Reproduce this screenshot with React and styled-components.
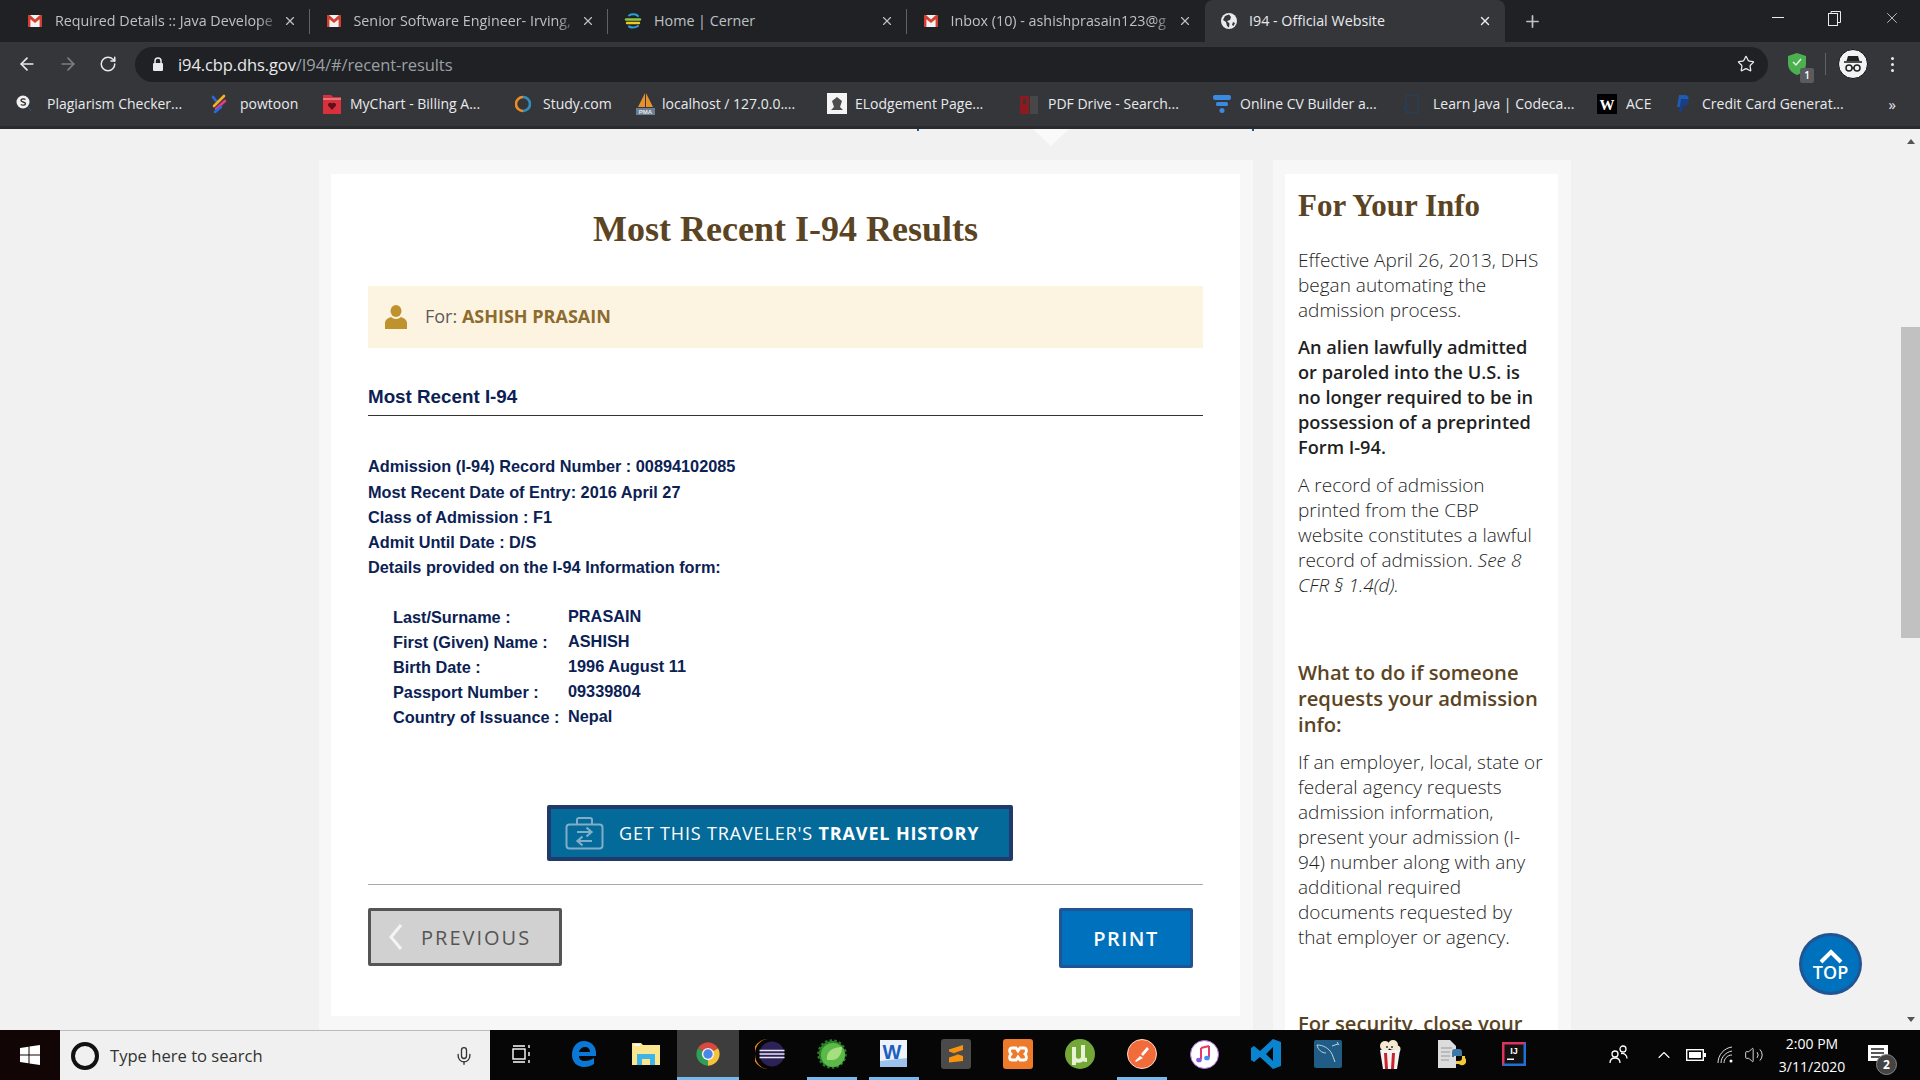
import React from "react";
import styled, { createGlobalStyle } from "styled-components";
import { ArrowLeft, ArrowRight, RotateCw, Star, X, Plus, Mic, ChevronUp, Volume2 } from "lucide-react";

const Global = createGlobalStyle`
    html, body { margin: 0; padding: 0; width: 1920px; height: 1080px; overflow: hidden; background: #f1f1f1; }
    * { box-sizing: border-box; }
`;

const Page = styled.div`
    width: 1920px;
    height: 1080px;
    display: flex;
    flex-direction: column;
    overflow: hidden;
    font-family: "Open Sans", "Liberation Sans", sans-serif;
`;

/* browser chrome */
const TabStrip = styled.div`
    height: 42px;
    flex: none;
    display: flex;
    padding-left: 11px;
    background: #202124;
`;

const Tab = styled.div`
    position: relative;
    width: ${p => (p.$active ? "300px" : "298.5px")};
    height: 42px;
    display: flex;
    align-items: center;
    padding: 0 13px 0 16px;
    border-radius: 8px 8px 0 0;
    background: ${p => (p.$active ? "#35363a" : "transparent")};
    color: ${p => (p.$active ? "#e8eaed" : "#bdc1c6")};
    font-size: 14.3px;
    ${p => p.$sep && `
      &::after {
        content: "";
        position: absolute;
        right: 0;
        top: 9px;
        height: 25px;
        width: 1px;
        background: #5f6368;
      }
    `}
`;

const TabTitle = styled.span`
    flex: 1;
    margin: 0 2px 2px 12px;
    white-space: nowrap;
    overflow: hidden;
    -webkit-mask-image: ${p => (p.$fade ? "linear-gradient(to right, #000 90%, transparent 100%)" : "none")};
    mask-image: ${p => (p.$fade ? "linear-gradient(to right, #000 90%, transparent 100%)" : "none")};
`;

const NewTab = styled.div`
    width: 44px;
    height: 42px;
    display: flex;
    align-items: center;
    justify-content: center;
    margin-left: 5px;
    color: #bdc1c6;
`;

const WindowControls = styled.div`
    margin-left: auto;
    display: flex;
    height: 36px;
    align-items: center;
    color: #e8eaed;
`;

const WindowButton = styled.div`
    width: 57px;
    display: flex;
    justify-content: center;
    align-items: center;
`;

const Toolbar = styled.div`
    height: 42px;
    flex: none;
    display: flex;
    align-items: center;
    background: #35363a;
    padding: 2px 0 0 17px;
`;

const NavButton = styled.div`
    width: 41px;
    flex: none;
    display: flex;
    color: ${p => (p.$dim ? "#7c7e82" : "#e8eaed")};
`;

const Omnibox = styled.div`
    width: 1633px;
    margin-left: -5px;
    height: 35px;
    flex: none;
    display: flex;
    align-items: center;
    padding: 0 13px 0 17px;
    border-radius: 18px;
    background: #202124;
    color: #9aa0a6;
    font-size: 16.5px;
`;

const Url = styled.div`
    margin-left: 14px;
    letter-spacing: -0.1px;
    span { color: #e8eaed; }
`;

const StarBox = styled.div`
    margin-left: auto;
    display: flex;
    color: #e8eaed;
`;

const ExtensionArea = styled.div`
    display: flex;
    align-items: center;
    padding-left: 19px;
`;

const Divider = styled.div`
    width: 1px;
    height: 22px;
    margin: 0 12px 0 18px;
    background: #5f6368;
`;

const Avatar = styled.div`
    width: 30px;
    height: 30px;
    border-radius: 50%;
    background: #f1f3f4;
    display: flex;
    align-items: center;
    justify-content: center;
    border: 1px solid #111;
`;

const MenuDots = styled.div`
    margin-left: 23px;
    display: flex;
    flex-direction: column;
    gap: 3px;
    i { width: 3px; height: 3px; border-radius: 50%; background: #e8eaed; display: block; }
`;

const ShieldWrap = styled.div`
    position: relative;
    display: flex;
`;

const ShieldBadge = styled.div`
    position: absolute;
    right: -7px;
    bottom: -7px;
    width: 14px;
    height: 15px;
    border-radius: 2px;
    background: #5a5b5e;
    color: #fff;
    font-size: 10px;
    font-weight: 600;
    text-align: center;
    line-height: 15px;
`;

const BookmarkBar = styled.div`
    height: 45px;
    flex: none;
    display: flex;
    align-items: center;
    padding: 0 0 3px 16px;
    background: #35363a;
    border-bottom: 3px solid #2a2b2e;
    color: #e8eaed;
    font-size: 14px;
`;

const Bookmark = styled.div`
    width: ${p => p.$w}px;
    flex: none;
    display: flex;
    align-items: center;
    gap: ${p => p.$gap || 12}px;
    white-space: nowrap;
`;

const MoreBookmarks = styled.div`
    margin-left: auto;
    margin-right: 24px;
    font-size: 15px;
`;

/* page */
const Viewport = styled.div`
    position: relative;
    flex: 1;
    min-height: 0;
    display: flex;
    background: #f1f1f1;
    overflow: hidden;
`;

const Content = styled.div`
    flex: 1;
    display: flex;
    align-items: flex-start;
    gap: 20px;
    padding: 31px 0 0 319px;
`;

const NavNotch = styled.div`
    position: absolute;
    left: 1033px;
    top: 0;
    border-left: 18px solid transparent;
    border-right: 18px solid transparent;
    border-top: 17px solid #fafafa;
`;

const NavTick = styled.div`
    position: absolute;
    left: ${p => p.$x}px;
    top: 0;
    width: 2px;
    height: 2px;
    background: #1a5a96;
`;

const Frame = styled.div`
    width: ${p => p.$w}px;
    flex: none;
    padding: 14px 13px 14px 12px;
    background: #f7f7f7;
`;

const MainCard = styled.main`
    height: 842px;
    padding: 25px 37px 0;
    background: #fff;
`;

const Title = styled.h1`
    margin: 0;
    text-align: center;
    font: 700 36px/60px "Liberation Serif", serif;
    color: #5b4423;
`;

const ForBanner = styled.div`
    height: 62px;
    margin-top: 27px;
    display: flex;
    align-items: center;
    gap: 18px;
    padding: 0 17px;
    background: #fdf3e1;
    color: #5b5b5b;
    font-size: 18px;
    b { color: #8c6c2e; font-weight: 700; }
    span { padding-bottom: 2px; }
`;

const SectionHead = styled.h2`
    margin: 37px 0 0;
    padding-bottom: 6px;
    border-bottom: 1px solid #333;
    font: 700 18.8px/24px "Liberation Sans", sans-serif;
    color: #0b2154;
`;

const Details = styled.div`
    margin-top: 38px;
    font: 700 16.3px/25px "Liberation Sans", sans-serif;
    color: #0b2154;
    div:first-child { margin-bottom: 1px; }
`;

const Traveler = styled.div`
    margin: 25px 0 0 25px;
    font: 700 16.3px/25px "Liberation Sans", sans-serif;
    color: #0b2154;
`;

const TravelerRow = styled.div`
    display: flex;
`;

const Label = styled.div`
    width: 175px;
`;

const Value = styled.div`
    transform: translateY(-1px);
`;

const TravelButton = styled.div`
    width: 466px;
    height: 56px;
    margin: 75px 0 0 179px;
    display: flex;
    align-items: center;
    padding-left: 14px;
    gap: 15px;
    border: 4px solid #1f3a6b;
    border-radius: 2px;
    background: #046a99;
    color: #fff;
    font-size: 18px;
    letter-spacing: 0.85px;
    white-space: nowrap;
    b { font-weight: 700; }
`;

const Rule = styled.div`
    height: 1px;
    margin-top: 23px;
    background: #aaa;
`;

const ButtonRow = styled.div`
    display: flex;
    align-items: flex-start;
    justify-content: space-between;
    margin-top: 23px;
    padding-right: 10px;
`;

const PrevButton = styled.div`
    width: 194px;
    height: 58px;
    display: flex;
    align-items: center;
    gap: 17px;
    padding-left: 17px;
    border: 3px solid #555;
    border-radius: 2px;
    background: #d1d1d1;
    color: #555;
    font-size: 20px;
    letter-spacing: 2px;
`;

const PrintButton = styled.div`
    width: 134px;
    height: 60px;
    display: flex;
    align-items: center;
    justify-content: center;
    border: 3px solid #205493;
    border-radius: 2px;
    background: #0071bc;
    color: #fff;
    font-size: 20px;
    font-weight: 600;
    letter-spacing: 1.5px;
`;

const SideCard = styled.aside`
    height: 860px;
    padding: 12px 13px 0;
    background: #fff;
    color: #1f1f1f;
    font-size: 19px;
    line-height: 25px;
    font-weight: 300;
`;

const SideTitle = styled.h2`
    margin: 0;
    font: 700 31px/40px "Liberation Serif", serif;
    color: #5b4423;
`;

const SideText = styled.p`
    margin: ${p => p.$top}px 0 0;
    font-weight: ${p => (p.$strong ? 600 : 300)};
    font-size: ${p => (p.$strong ? "18.2px" : "19px")};
`;

const SideHead = styled.h3`
    margin: ${p => p.$top}px 0 0;
    font-size: 20.2px;
    line-height: 26px;
    font-weight: 600;
    color: #5b4423;
`;

const Scrollbar = styled.div`
    width: 19px;
    flex: none;
    display: flex;
    flex-direction: column;
    align-items: center;
`;

const ScrollArrow = styled.div`
    margin-top: ${p => p.$top}px;
    border-left: 4px solid transparent;
    border-right: 4px solid transparent;
    ${p => (p.$up ? "border-bottom: 5px solid #555;" : "border-top: 5px solid #555;")}
`;

const ScrollThumb = styled.div`
    width: 19px;
    height: 311px;
    margin-top: 183px;
    background: #c1c1c1;
`;

const TopButton = styled.div`
    position: absolute;
    left: 1799px;
    top: 804px;
    width: 63px;
    height: 62px;
    display: flex;
    flex-direction: column;
    align-items: center;
    justify-content: center;
    border: 3px solid #205493;
    border-radius: 50%;
    background: #0071bc;
    color: #fff;
    font-size: 18px;
    line-height: 16px;
    font-weight: 600;
`;

/* taskbar */
const Taskbar = styled.div`
    height: 50px;
    flex: none;
    display: flex;
    align-items: center;
    background: #060606;
    color: #fff;
`;

const StartButton = styled.div`
    width: 60px;
    height: 50px;
    display: flex;
    align-items: center;
    justify-content: center;
    background: #120505;
`;

const SearchBox = styled.div`
    width: 430px;
    height: 50px;
    display: flex;
    align-items: center;
    padding: 0 16px 0 11px;
    background: #f0f0f0;
    border-top: 1px solid #bbb;
    color: #333;
    font-size: 16.6px;
`;

const Cortana = styled.div`
    width: 28px;
    height: 28px;
    margin-right: 11px;
    border-radius: 50%;
    border: 4px solid #111;
`;

const MicBox = styled.div`
    margin-left: auto;
    display: flex;
    color: #333;
`;

const TaskSlot = styled.div`
    position: relative;
    width: ${p => p.$w || 62}px;
    height: 50px;
    flex: none;
    display: flex;
    align-items: center;
    justify-content: center;
    padding-bottom: 2px;
    background: ${p => (p.$open ? "#3d3d3d" : "transparent")};
    ${p => p.$bar && `
      &::after {
        content: "";
        position: absolute;
        left: ${p.$open ? 0 : 6}px;
        right: ${p.$open ? 0 : 6}px;
        bottom: 0;
        height: 3px;
        background: #76b9ed;
      }
    `}
`;

const Tray = styled.div`
    margin-left: auto;
    padding-right: 32px;
    display: flex;
    align-items: center;
    height: 50px;
`;

const TrayIcon = styled.div`
    width: ${p => p.$w}px;
    margin-left: ${p => p.$ml || 0}px;
    display: flex;
    justify-content: center;
    color: #fff;
`;

const Clock = styled.div`
    width: 90px;
    text-align: center;
    font-size: 14px;
    line-height: 23px;
`;

const NoticeWrap = styled.div`
    position: relative;
    margin-left: 11px;
    width: 20px;
    display: flex;
    padding: 3px 0 5px;
`;

const NoticeBadge = styled.div`
    position: absolute;
    left: 8px;
    top: 12px;
    width: 21px;
    height: 21px;
    border-radius: 50%;
    background: #444;
    border: 1px solid #888;
    color: #fff;
    font-size: 12px;
    font-weight: 700;
    line-height: 19px;
    text-align: center;
`;

/* drawings */
const Gmail = () => (
    <svg width="16" height="16" viewBox="0 0 16 16">
        <rect x="1" y="2" width="14" height="12" fill="#f1f1f1" />
        <path d="M1 2h2l5 4.5L13 2h2v12h-2.4V6.2L8 10 3.4 6.2V14H1z" fill="#d23f31" />
    </svg>
);

const Cerner = () => (
    <svg width="18" height="18" viewBox="0 0 18 18" fill="none" strokeLinecap="round">
        <path d="M5 3.5C8 1.5 12 2 14 4" stroke="#2d9fd8" strokeWidth="2" />
        <path d="M2 7.5h14" stroke="#8cc63f" strokeWidth="2.4" />
        <path d="M3 11h12" stroke="#f2c81e" strokeWidth="2.4" />
        <path d="M5 14.5c3 1.5 6 1.5 9-.5" stroke="#2d9fd8" strokeWidth="2" />
    </svg>
);

const GlobeFav = () => (
    <svg width="16" height="16" viewBox="0 0 16 16">
        <circle cx="8" cy="8" r="8" fill="#e8eaed" />
        <path d="M8 1.5 4 3 2 7l3 2 1 4 2 1.5.5-4L6 8l3-1 1-3zM12 9l-1 3 1.5 1 1.5-3z" fill="#35363a" />
    </svg>
);

const LockIcon = () => (
    <svg width="12" height="15" viewBox="0 0 12 15">
        <path d="M3 6V4a3 3 0 0 1 6 0v2" fill="none" stroke="#e8eaed" strokeWidth="1.5" />
        <rect x="1" y="6" width="10" height="8" rx="1" fill="#e8eaed" />
    </svg>
);

const Shield = () => (
    <svg width="20" height="24" viewBox="0 0 20 24">
        <path d="M10 1 19 4v8c0 5-4 9-9 11-5-2-9-6-9-11V4z" fill="#4caf50" />
        <path d="m6 10 3 3 5-6" fill="none" stroke="#e8f5e9" strokeWidth="1.5" />
    </svg>
);

const Incognito = () => (
    <svg width="22" height="22" viewBox="0 0 22 22" fill="none">
        <path d="M6 3h10l1.500 5h-13z" fill="#222" />
        <path d="M2 9h18" stroke="#222" strokeWidth="1.6" />
        <circle cx="7" cy="15" r="3" stroke="#222" strokeWidth="1.5" />
        <circle cx="15" cy="15" r="3" stroke="#222" strokeWidth="1.5" />
        <path d="M10 15h2" stroke="#222" strokeWidth="1.5" />
    </svg>
);

const Plagiarism = () => (
    <svg width="16" height="18" viewBox="0 0 16 18">
        <circle cx="7" cy="7" r="6.5" fill="#f1f1f1" />
        <path d="M9.5 4.500C8 3.500 5 3.800 5 5.500 5 7.500 9.500 6.500 9.500 8.700 9.500 10.300 6.500 10.500 4.800 9.500" fill="none" stroke="#333" strokeWidth="1.4" />
        <path d="m12 12 3 4" stroke="#3a5068" strokeWidth="1.2" />
    </svg>
);

const Powtoon = () => (
    <svg width="16" height="20" viewBox="0 0 16 20" fill="none" strokeWidth="2.6" strokeLinecap="round">
        <path d="M2 3 6 8" stroke="#2a6ae0" />
        <path d="M13 2 3 12" stroke="#f5b21b" />
        <path d="M14 7 5 15" stroke="#e23c8a" />
        <path d="M10 13 4 18" stroke="#2a6ae0" />
    </svg>
);

const MyChart = () => (
    <svg width="20" height="22" viewBox="0 0 20 22">
        <path d="M1 2h8l2 2h8v17H1z" fill="#d8303c" />
        <path d="M1 6h18" stroke="#f3b6ba" strokeWidth="1" />
        <path d="M10 17 6 12.500a2.300 2.300 0 0 1 4-2 2.300 2.300 0 0 1 4 2z" fill="#5a1218" />
    </svg>
);

const Study = () => (
    <svg width="16" height="18" viewBox="0 0 16 18" fill="none" strokeWidth="2.6">
        <path d="M8 2a7 7 0 0 0 0 14" stroke="#f08a24" />
        <path d="M8 2a7 7 0 0 1 0 14" stroke="#2f8fc0" />
    </svg>
);

const Pma = () => (
    <svg width="21" height="24" viewBox="0 0 21 24">
        <path d="M10 1 3 15h7zM11 1l7 14h-7z" fill="#e8912b" />
        <path d="M1 16h19v7H1z" fill="#6e7d96" />
        <text x="10.5" y="22" fontSize="6" fontWeight="700" fill="#e6e6e6" textAnchor="middle" fontFamily="Liberation Sans">PMA</text>
    </svg>
);

const Elodge = () => (
    <svg width="20" height="21" viewBox="0 0 20 21">
        <rect width="20" height="21" fill="#f4f4f4" />
        <path d="M10 4 15 8 13 14 16 17H4l3-3-2-6z" fill="#4e4e4e" />
    </svg>
);

const PdfDrive = () => (
    <svg width="20" height="21" viewBox="0 0 20 21">
        <path d="M1 3h9v18H1z" fill="#8d1a1e" />
        <path d="M11 3h8v18h-8z" fill="#47474a" />
        <path d="M4 6h3v5H4z" fill="#35363a" />
    </svg>
);

const CvBuilder = () => (
    <svg width="20" height="22" viewBox="0 0 20 22">
        <rect x="1" y="2" width="18" height="5" rx="2" fill="#3a8be0" />
        <rect x="4" y="9" width="12" height="4" rx="1.5" fill="#3a8be0" />
        <rect x="7.5" y="15" width="5" height="5" rx="2.5" fill="#3a8be0" />
    </svg>
);

const Codecademy = () => (
    <svg width="18" height="22" viewBox="0 0 18 22" fill="none" stroke="#26405c" strokeWidth="1.2">
        <path d="M3 2h12v18H3z" />
        <path d="M7 13a3 3 0 1 0 0 3" />
    </svg>
);

const AceTile = () => (
    <svg width="20" height="20" viewBox="0 0 20 20">
        <rect width="20" height="20" fill="#000" />
        <text x="10" y="16" textAnchor="middle" fontSize="15" fontWeight="700" fill="#fff" fontFamily="Liberation Serif">W</text>
    </svg>
);

const Paypal = () => (
    <svg width="14" height="20" viewBox="0 0 14 20">
        <path d="M3 1h6c4 0 5 5 1 7H6l-1 5H1z" fill="#1f5bb0" />
        <path d="M5 5h6c3 1 2 7-2 7H7l-1 6H3z" fill="#1a3e86" />
    </svg>
);

const TravelIcon = () => (
    <svg width="39" height="33" viewBox="0 0 39 33" fill="none" stroke="#80aec8" strokeWidth="2">
        <rect x="1.5" y="7.5" width="36" height="24" rx="3" />
        <path d="M12 7.5V3a2 2 0 0 1 2-2h11a2 2 0 0 1 2 2v4.500" />
        <path d="M12 15h14M21.500 10.500l5 4.500-5 4.500M27 24H13M17.500 19.500l-5 4.500 5 4.500" strokeWidth="2.2" />
    </svg>
);

const PersonIcon = () => (
    <svg width="22" height="24" viewBox="0 0 22 24" fill="#c0922d">
        <ellipse cx="11" cy="6" rx="5.5" ry="6" />
        <path d="M0 24v-6c0-3 3-5 6-6 3 2.500 7 2.500 10 0 3 1 6 3 6 6v6z" />
    </svg>
);

const PrevChevron = () => (
    <svg width="16" height="28" viewBox="0 0 16 28" fill="none" stroke="#f4f4f4" strokeWidth="3">
        <path d="M13 2 3 14l10 12" />
    </svg>
);

const WindowsLogo = () => (
    <svg width="20" height="20" viewBox="0 0 20 20" fill="#fff">
        <path d="M0 3l8.500-1.300v7.800H0zM9.500 1.500 20 0v9.500H9.500zM0 10.500h8.500v7.800L0 17zM9.500 10.500H20V20L9.500 18.500z" />
    </svg>
);

const TaskView = () => (
    <svg width="20" height="20" viewBox="0 0 20 20" fill="none" stroke="#fff" strokeWidth="1.4">
        <rect x="1" y="5" width="12" height="10" />
        <path d="M1 2h12M1 18h12M17 1v3M17 8v4M17 16v3" />
    </svg>
);

const Edge = () => (
    <svg width="26" height="28" viewBox="0 0 26 28">
        <path d="M13 1C6 1 1 7 1 15c0 7 5 12 12 12 4 0 7-1 10-3v-6c-3 2-6 3-9 3-4 0-6-2-6-5h17v-3C25 6 20 1 13 1zm-5 11c.5-3 3-5 6-5s5 2 5 5z" fill="#0a78d7" />
    </svg>
);

const Explorer = () => (
    <svg width="28" height="24" viewBox="0 0 28 24">
        <path d="M0 1h9l2 2h17v20H0z" fill="#fbe58d" />
        <rect x="2" y="2" width="6" height="2" fill="#f5f5f5" />
        <path d="M5 12h18v11h-5v-6h-8v6H5z" fill="#3fb4e8" />
    </svg>
);

const Chrome = () => (
    <svg width="28" height="28" viewBox="0 0 48 48">
        <path d="M24 24 6.700 14A20 20 0 0 1 41.300 14z" fill="#d8483c" />
        <path d="M24 24 41.300 14A20 20 0 0 1 24 44z" fill="#f5c33b" />
        <path d="M24 24 24 44A20 20 0 0 1 6.700 14z" fill="#2f9e57" />
        <circle cx="24" cy="24" r="10.5" fill="#f1f1f1" />
        <circle cx="24" cy="24" r="8" fill="#4a87e8" />
    </svg>
);

const Eclipse = () => (
    <svg width="30" height="30" viewBox="0 0 30 30">
        <path d="M13 0A15 15 0 0 0 13 30 13 15 0 0 1 13 0z" fill="#f08a1d" />
        <circle cx="17" cy="15" r="12.500" fill="#2c2255" />
        <path d="M4.500 11.500h25M4.500 15h25M4.500 18.500h25" stroke="#e8e6f4" strokeWidth="1.7" />
    </svg>
);

const Spring = () => (
    <svg width="30" height="30" viewBox="0 0 30 30">
        <circle cx="15" cy="15" r="13" fill="#2f8f2f" strokeDasharray="2.500 2" stroke="#2a7a2a" strokeWidth="3.500" />
        <circle cx="16" cy="16" r="12" fill="#5bb947" />
        <path d="M10 21C9 13 15 8 25 8c0 8-5 14-11 13z" fill="#a6df80" />
    </svg>
);

const Word = () => (
    <svg width="28" height="28" viewBox="0 0 28 28">
        <rect width="27" height="27" fill="#eef3fb" />
        <path d="M0 21 27 18v9H0z" fill="#9cc1ec" />
        <text x="12" y="19" textAnchor="middle" fontSize="20" fontWeight="700" fill="#1d5fbf" fontFamily="Liberation Sans">W</text>
    </svg>
);

const Sublime = () => (
    <svg width="30" height="30" viewBox="0 0 30 30">
        <rect width="30" height="30" rx="3" fill="#4a4a4a" />
        <path d="M8 10.500 22 6v5l-9 3 9 3v5L8 23.500v-5l9-3-9-3z" fill="#f7930e" />
    </svg>
);

const Xampp = () => (
    <svg width="30" height="30" viewBox="0 0 30 30">
        <rect width="30" height="30" rx="3" fill="#ee7a2c" />
        <path d="M9 9h4l2 3 2-3h4c3 0 3 4 1 6 2 2 2 6-1 6h-4l-2-3-2 3H9c-3 0-3-4-1-6-2-2-2-6 1-6z" fill="none" stroke="#fff" strokeWidth="2.8" />
    </svg>
);

const Torrent = () => (
    <svg width="30" height="30" viewBox="0 0 30 30">
        <circle cx="15" cy="15" r="15" fill="#73a839" />
        <path d="M9 8v10c0 5 9 5 9 0V6M18 18c0 2 1 3 4 3M9 18v8" fill="none" stroke="#e8f3d6" strokeWidth="4" />
    </svg>
);

const Postman = () => (
    <svg width="30" height="30" viewBox="0 0 30 30">
        <circle cx="15" cy="15" r="14.5" fill="#f26b3a" stroke="#ffd9c8" strokeWidth="1" />
        <path d="m8 22 5-5 3 2-7 4zM14 15l6-7 2 2-6 7z" fill="#fff" />
    </svg>
);

const Itunes = () => (
    <svg width="29" height="29" viewBox="0 0 29 29">
        <circle cx="14.5" cy="14.5" r="14" fill="#fff" stroke="#b06ad8" strokeWidth="1" />
        <path d="M11 8v11M19 6v11M11 8l8-2" stroke="#e8386a" strokeWidth="2" fill="none" />
        <ellipse cx="9" cy="20" rx="2.8" ry="2.3" fill="#8a5be0" />
        <ellipse cx="17" cy="18" rx="2.8" ry="2.3" fill="#3c8ef0" />
    </svg>
);

const VsCode = () => (
    <svg width="30" height="30" viewBox="0 0 30 30">
        <path d="M22 0 30 3v24l-8 3-13-12-6 5-3-2V9l3-2 6 5zM22 8l-7 7 7 7z" fill="#0a84cf" />
    </svg>
);

const Mysql = () => (
    <svg width="28" height="28" viewBox="0 0 28 28">
        <rect width="28" height="28" rx="2" fill="#215c86" />
        <path d="M3 5c6 0 12 3 15 9l3 8M3 5c1 5 5 8 9 8M23 2l2 3M18 6l6-2" fill="none" stroke="#bcd3e2" strokeWidth="1" />
    </svg>
);

const Popcorn = () => (
    <svg width="22" height="29" viewBox="0 0 22 29">
        <circle cx="6" cy="6" r="5" fill="#f5e9cf" />
        <circle cx="14" cy="5" r="5" fill="#f5e9cf" />
        <circle cx="18" cy="9" r="3.5" fill="#f5e9cf" />
        <path d="M1 10h20l-3 19H4z" fill="#f4f4f4" />
        <path d="M5 13h3l1 16H6zM13 13h3l-1 16h-3z" fill="#c8242b" />
        <circle cx="8" cy="7" r="1" fill="#333" />
        <circle cx="13" cy="7" r="1" fill="#333" />
    </svg>
);

const PyFile = () => (
    <svg width="28" height="29" viewBox="0 0 28 29">
        <path d="M0 0h12l6 6v22H0z" fill="#dcdcdc" />
        <path d="M3 8h11M3 12h9M3 16h9M3 20h8" stroke="#999" strokeWidth="1" />
        <path d="M14 12a3 3 0 0 1 3-3h4a3 3 0 0 1 3 3v4h-8v1h-2z" fill="#3c78a8" />
        <path d="M24 18a3 3 0 0 1-3 3h-3v3h3a3 3 0 0 0 6-6v-2h-3z" fill="#f3c93c" />
    </svg>
);

const Intellij = () => (
    <svg width="24" height="24" viewBox="0 0 24 24">
        <rect width="24" height="24" fill="#e0315f" />
        <path d="M24 0v24H0z" fill="#1f6fd6" />
        <rect x="2.5" y="2.5" width="19" height="19" fill="#111" />
        <text x="12" y="12" textAnchor="middle" fontSize="9" fontWeight="700" fill="#fff" fontFamily="Liberation Sans">IJ</text>
        <rect x="5" y="16.5" width="7" height="1.5" fill="#fff" />
    </svg>
);

const People = () => (
    <svg width="20" height="20" viewBox="0 0 20 20" fill="none" stroke="#fff" strokeWidth="1.3">
        <circle cx="6" cy="9" r="3" />
        <circle cx="14" cy="4" r="3" />
        <path d="M1 18c0-3 2-5 5-5s5 2 5 5M12 8.500c3-.5 6 1.500 6 5" />
    </svg>
);

const Battery = () => (
    <svg width="20" height="12" viewBox="0 0 20 12">
        <rect x="0.7" y="0.7" width="16.6" height="10.6" fill="none" stroke="#fff" strokeWidth="1.4" />
        <rect x="3" y="3" width="12" height="6" fill="#fff" />
        <rect x="18" y="4" width="2" height="4" fill="#fff" />
    </svg>
);

const WifiIcon = () => (
    <svg width="18" height="18" viewBox="0 0 18 18" fill="none" stroke="#ddd" strokeWidth="1">
        <path d="M1 17C1 9 7 2 15 1M4 17c0-6 5-11 11-12M7 17c0-4 3-8 8-8" />
        <circle cx="14" cy="15" r="1.5" fill="#fff" stroke="none" />
    </svg>
);

const NoticeIcon = () => (
    <svg width="20" height="18" viewBox="0 0 20 18">
        <path d="M0 0h20v16H12l-1 2-2-2H0z" fill="#fff" />
        <path d="M3 4h13M3 8h13M3 12h9" stroke="#222" strokeWidth="1.3" />
    </svg>
);

const RestoreIcon = () => (
    <svg width="13" height="15" viewBox="0 0 13 15" fill="none" stroke="#e8eaed" strokeWidth="1">
        <rect x="0.5" y="2.5" width="9" height="12" />
        <path d="M3 2.500v-2h9.500v11h-3" />
    </svg>
);

const TopChevron = () => (
    <svg width="26" height="15" viewBox="0 0 26 15" fill="none" stroke="#fff" strokeWidth="4">
        <path d="M3 13 13 3l10 10" />
    </svg>
);

const tabs = [
    { title: "Required Details :: Java Develope", icon: <Gmail />, sep: true, fade: true },
    { title: "Senior Software Engineer- Irving,", icon: <Gmail />, sep: true, fade: true },
    { title: "Home | Cerner", icon: <Cerner />, sep: true },
    { title: "Inbox (10) - ashishprasain123@g", icon: <Gmail />, fade: true },
];

const bookmarks = [
    { label: "Plagiarism Checker...", icon: <Plagiarism />, w: 195, gap: 15 },
    { label: "powtoon", icon: <Powtoon />, w: 111, gap: 13 },
    { label: "MyChart - Billing A...", icon: <MyChart />, w: 193, gap: 8 },
    { label: "Study.com", icon: <Study />, w: 120, gap: 12 },
    { label: "localhost / 127.0.0....", icon: <Pma />, w: 192, gap: 6 },
    { label: "ELodgement Page...", icon: <Elodge />, w: 192, gap: 8 },
    { label: "PDF Drive - Search...", icon: <PdfDrive />, w: 193, gap: 9 },
    { label: "Online CV Builder a...", icon: <CvBuilder />, w: 191, gap: 8 },
    { label: "Learn Java | Codeca...", icon: <Codecademy />, w: 194, gap: 12 },
    { label: "ACE", icon: <AceTile />, w: 79, gap: 9 },
    { label: "Credit Card Generat...", icon: <Paypal />, w: 200, gap: 12 },
];

const taskApps = [
    { icon: <Edge /> },
    { icon: <Explorer /> },
    { icon: <Chrome />, open: true, bar: true },
    { icon: <Eclipse /> },
    { icon: <Spring />, bar: true },
    { icon: <Word />, bar: true },
    { icon: <Sublime /> },
    { icon: <Xampp /> },
    { icon: <Torrent /> },
    { icon: <Postman />, bar: true },
    { icon: <Itunes /> },
    { icon: <VsCode /> },
    { icon: <Mysql /> },
    { icon: <Popcorn /> },
    { icon: <PyFile /> },
    { icon: <Intellij /> },
];

const traveler = [
    ["Last/Surname :", "PRASAIN"],
    ["First (Given) Name :", "ASHISH"],
    ["Birth Date :", "1996 August 11"],
    ["Passport Number :", "09339804"],
    ["Country of Issuance :", "Nepal"],
];

export default function App() {
    return (
        <Page>
            <Global />
            <TabStrip>
                {tabs.map(t => (
                    <Tab key={t.title} $sep={t.sep}>
                        {t.icon}
                        <TabTitle $fade={t.fade}>{t.title}</TabTitle>
                        <X size={14} strokeWidth={2} />
                    </Tab>
                ))}
                <Tab $active>
                    <GlobeFav />
                    <TabTitle>I94 - Official Website</TabTitle>
                    <X size={14} strokeWidth={2.4} />
                </Tab>
                <NewTab><Plus size={19} strokeWidth={2.2} /></NewTab>
                <WindowControls>
                    <WindowButton><svg width="12" height="2"><rect width="12" height="1" fill="#e8eaed" /></svg></WindowButton>
                    <WindowButton><RestoreIcon /></WindowButton>
                    <WindowButton><X size={18} strokeWidth={1} /></WindowButton>
                </WindowControls>
            </TabStrip>

            <Toolbar>
                <NavButton><ArrowLeft size={20} /></NavButton>
                <NavButton $dim><ArrowRight size={20} /></NavButton>
                <NavButton><RotateCw size={18} /></NavButton>
                <Omnibox>
                    <LockIcon />
                    <Url><span>i94.cbp.dhs.gov</span>/I94/#/recent-results</Url>
                    <StarBox><Star size={18} strokeWidth={1.7} /></StarBox>
                </Omnibox>
                <ExtensionArea>
                    <ShieldWrap>
                        <Shield />
                        <ShieldBadge>1</ShieldBadge>
                    </ShieldWrap>
                    <Divider />
                    <Avatar><Incognito /></Avatar>
                    <MenuDots><i /><i /><i /></MenuDots>
                </ExtensionArea>
            </Toolbar>

            <BookmarkBar>
                {bookmarks.map(b => (
                    <Bookmark key={b.label} $w={b.w} $gap={b.gap}>
                        {b.icon}
                        {b.label}
                    </Bookmark>
                ))}
                <MoreBookmarks>»</MoreBookmarks>
            </BookmarkBar>

            <Viewport>
                <NavTick $x={917} />
                <NavTick $x={1252} />
                <NavNotch />
                <Content>
                    <Frame $w={934}>
                        <MainCard>
                            <Title>Most Recent I-94 Results</Title>
                            <ForBanner>
                                <PersonIcon />
                                <span>For: <b>ASHISH PRASAIN</b></span>
                            </ForBanner>
                            <SectionHead>Most Recent I-94</SectionHead>
                            <Details>
                                <div>Admission (I-94) Record Number : 00894102085</div>
                                <div>Most Recent Date of Entry: 2016 April 27</div>
                                <div>Class of Admission : F1</div>
                                <div>Admit Until Date : D/S</div>
                                <div>Details provided on the I-94 Information form:</div>
                            </Details>
                            <Traveler>
                                {traveler.map(([k, v]) => (
                                    <TravelerRow key={k}>
                                        <Label>{k}</Label>
                                        <Value>{v}</Value>
                                    </TravelerRow>
                                ))}
                            </Traveler>
                            <TravelButton>
                                <TravelIcon />
                                <span>GET THIS TRAVELER'S <b>TRAVEL HISTORY</b></span>
                            </TravelButton>
                            <Rule />
                            <ButtonRow>
                                <PrevButton>
                                    <PrevChevron />
                                    PREVIOUS
                                </PrevButton>
                                <PrintButton>PRINT</PrintButton>
                            </ButtonRow>
                        </MainCard>
                    </Frame>
                    <Frame $w={298}>
                        <SideCard>
                            <SideTitle>For Your Info</SideTitle>
                            <SideText $top={22}>Effective April 26, 2013, DHS began automating the admission process.</SideText>
                            <SideText $top={12} $strong>An alien lawfully admitted or paroled into the U.S. is no longer required to be in possession of a preprinted Form I-94.</SideText>
                            <SideText $top={13}>A record of admission printed from the CBP website constitutes a lawful record of admission. <em>See 8 CFR § 1.4(d).</em></SideText>
                            <SideHead $top={61}>What to do if someone requests your admission info:</SideHead>
                            <SideText $top={13}>If an employer, local, state or federal agency requests admission information, present your admission (I-94) number along with any additional required documents requested by that employer or agency.</SideText>
                            <SideHead $top={60}>For security, close your</SideHead>
                        </SideCard>
                    </Frame>
                </Content>
                <Scrollbar>
                    <ScrollArrow $up $top={10} />
                    <ScrollThumb />
                    <ScrollArrow $top={379} />
                </Scrollbar>
                <TopButton>
                    <TopChevron />
                    TOP
                </TopButton>
            </Viewport>

            <Taskbar>
                <StartButton><WindowsLogo /></StartButton>
                <SearchBox>
                    <Cortana />
                    Type here to search
                    <MicBox><Mic size={20} strokeWidth={1.6} /></MicBox>
                </SearchBox>
                <TaskSlot $w={63}><TaskView /></TaskSlot>
                {taskApps.map((a, i) => (
                    <TaskSlot key={i} $open={a.open} $bar={a.bar}>{a.icon}</TaskSlot>
                ))}
                <Tray>
                    <TrayIcon $w={26}><People /></TrayIcon>
                    <TrayIcon $w={34} $ml={15}><ChevronUp size={20} strokeWidth={1.3} /></TrayIcon>
                    <TrayIcon $w={30}><Battery /></TrayIcon>
                    <TrayIcon $w={30}><WifiIcon /></TrayIcon>
                    <TrayIcon $w={26}><Volume2 size={20} strokeWidth={1} /></TrayIcon>
                    <Clock>
                        <div>2:00 PM</div>
                        <div>3/11/2020</div>
                    </Clock>
                    <NoticeWrap>
                        <NoticeIcon />
                        <NoticeBadge>2</NoticeBadge>
                    </NoticeWrap>
                </Tray>
            </Taskbar>
        </Page>
    );
}
